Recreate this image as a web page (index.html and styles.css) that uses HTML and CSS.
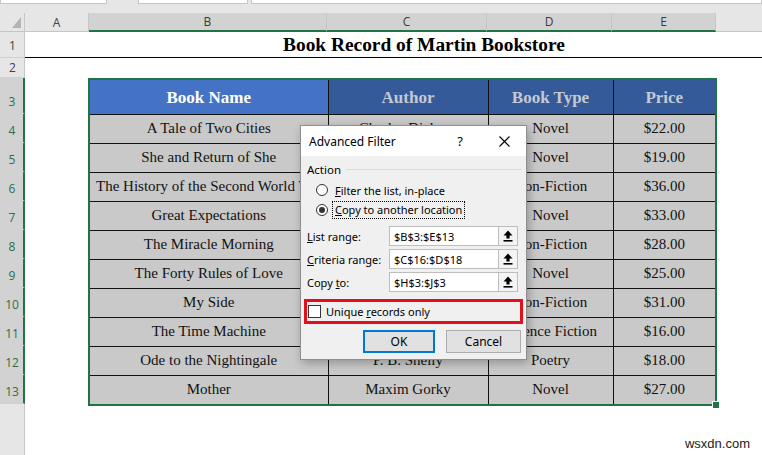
FILE: index.html
```html
<!DOCTYPE html>
<html lang="en">
<head>
    <meta charset="UTF-8">
    <title>Book Record of Martin Bookstore</title>
    <link rel="stylesheet" href="styles.css">
</head>
<body>
    <div class="topbar">
        <div class="namebox"></div>
        <div class="fxbox"></div>
        <div class="formula"></div>
    </div>

    <div class="colheads">
        <div class="corner"><span class="tri"></span></div>
        <div class="colhead col-a">A</div>
        <div class="colhead col-b sel">B</div>
        <div class="colhead col-c sel">C</div>
        <div class="colhead col-d sel">D</div>
        <div class="colhead col-e sel">E</div>
        <div class="colhead col-rest"></div>
    </div>

    <div class="sheet">
        <div class="rowheads">
            <div class="rowhead r1">1</div>
            <div class="rowhead r2">2</div>
            <div class="rowhead r3 sel">3</div>
            <div class="rowhead sel">4</div>
            <div class="rowhead sel">5</div>
            <div class="rowhead sel">6</div>
            <div class="rowhead sel">7</div>
            <div class="rowhead sel">8</div>
            <div class="rowhead sel">9</div>
            <div class="rowhead sel">10</div>
            <div class="rowhead sel">11</div>
            <div class="rowhead sel">12</div>
            <div class="rowhead sel">13</div>
            <div class="rowhead fill"></div>
        </div>

        <div class="cells">
            <div class="title-row"><span>Book Record of Martin Bookstore</span></div>
            <div class="blank-row"></div>
            <div class="records-wrap">
                <table class="records">
                    <colgroup>
                        <col class="w-b"><col class="w-c"><col class="w-d"><col class="w-e">
                    </colgroup>
                    <tr class="head">
                        <th class="active">Book Name</th>
                        <th>Author</th>
                        <th>Book Type</th>
                        <th>Price</th>
                    </tr>
                    <tr><td>A Tale of Two Cities</td><td>Charles Dickens</td><td>Novel</td><td>$22.00</td></tr>
                    <tr><td>She and Return of She</td><td>H. Rider Haggard</td><td>Novel</td><td>$19.00</td></tr>
                    <tr><td class="clip">The History of the Second World War</td><td>Winston Churchill</td><td>Non-Fiction</td><td>$36.00</td></tr>
                    <tr><td>Great Expectations</td><td>Charles Dickens</td><td>Novel</td><td>$33.00</td></tr>
                    <tr><td>The Miracle Morning</td><td>Hal Elrod</td><td>Non-Fiction</td><td>$28.00</td></tr>
                    <tr><td>The Forty Rules of Love</td><td>Elif Shafak</td><td>Novel</td><td>$25.00</td></tr>
                    <tr><td>My Side</td><td>David Beckham</td><td>Non-Fiction</td><td>$31.00</td></tr>
                    <tr><td>The Time Machine</td><td>H. G. Wells</td><td>Science Fiction</td><td>$16.00</td></tr>
                    <tr><td>Ode to the Nightingale</td><td>P. B. Shelly</td><td>Poetry</td><td>$18.00</td></tr>
                    <tr class="last"><td>Mother</td><td>Maxim Gorky</td><td>Novel</td><td>$27.00</td></tr>
                </table>
                <span class="handle"></span>
            </div>
        </div>
    </div>

    <!-- Advanced Filter dialog, floating over the sheet -->
    <div class="dialog">
        <div class="dlg-title">
            <span class="dlg-name">Advanced Filter</span>
            <span class="dlg-help">?</span>
            <span class="dlg-close">
                <svg width="11" height="11" viewBox="0 0 11 11"><path d="M0.5 0.5 L10.5 10.5 M10.5 0.5 L0.5 10.5" stroke="#000" stroke-width="1.1" fill="none"/></svg>
            </span>
        </div>
        <div class="dlg-body">
            <div class="legend"><span>Action</span><span class="legend-line"></span></div>
            <div class="radio-row first">
                <span class="radio"></span>
                <span class="radio-text"><u>F</u>ilter the list, in-place</span>
            </div>
            <div class="radio-row">
                <span class="radio checked"></span>
                <span class="radio-text focus"><u>C</u>opy to another location</span>
            </div>

            <div class="range-row first">
                <span class="range-label"><u>L</u>ist range:</span>
                <div class="range-field"><span class="range-value">$B$3:$E$13</span><span class="range-btn"><svg width="10" height="12" viewBox="0 0 10 12"><path d="M5 0.5 L9.5 5.5 H6.6 V8.5 H3.4 V5.5 H0.5 Z" fill="#000"/><rect x="0.5" y="10" width="9" height="1.6" fill="#000"/></svg></span></div>
            </div>
            <div class="range-row">
                <span class="range-label"><u>C</u>riteria range:</span>
                <div class="range-field"><span class="range-value">$C$16:$D$18</span><span class="range-btn"><svg width="10" height="12" viewBox="0 0 10 12"><path d="M5 0.5 L9.5 5.5 H6.6 V8.5 H3.4 V5.5 H0.5 Z" fill="#000"/><rect x="0.5" y="10" width="9" height="1.6" fill="#000"/></svg></span></div>
            </div>
            <div class="range-row">
                <span class="range-label">Copy <u>t</u>o:</span>
                <div class="range-field"><span class="range-value">$H$3:$J$3</span><span class="range-btn"><svg width="10" height="12" viewBox="0 0 10 12"><path d="M5 0.5 L9.5 5.5 H6.6 V8.5 H3.4 V5.5 H0.5 Z" fill="#000"/><rect x="0.5" y="10" width="9" height="1.6" fill="#000"/></svg></span></div>
            </div>

            <div class="unique-box">
                <span class="checkbox"></span>
                <span>Unique <u>r</u>ecords only</span>
            </div>

            <div class="dlg-buttons">
                <button class="btn default">OK</button>
                <button class="btn">Cancel</button>
            </div>
        </div>
    </div>

    <div class="watermark">wsxdn.com</div>
</body>
</html>
```

FILE: styles.css
```css
body {
    margin: 0;
    width: 762px;
    height: 455px;
    overflow: hidden;
    background: #fff;
    position: relative;
}

/* barra superior (cuadro de nombre y fórmulas) */
.topbar {
    height: 13px;
    background: #e6e6e6;
    display: flex;
    align-items: flex-start;
}

.topbar div {
    height: 3px;
    background: #fff;
    border: 1px solid #c6c6c6;
    border-top: none;
}

.namebox { width: 105px; }
.fxbox { width: 108px; margin-left: 31px; }
.formula { flex: 1; margin-left: 3px; }

/* encabezados de columna */
.colheads {
    display: flex;
    height: 19px;
    background: #e6e6e6;
    font-family: "Open Sans", "Noto Sans", sans-serif;
    font-size: 12px;
    color: #444;
}

.corner {
    width: 25px;
    box-sizing: border-box;
    border-right: 1px solid #c6c6c6;
    border-bottom: 1px solid #c6c6c6;
    position: relative;
}

.tri {
    position: absolute;
    right: 3px;
    bottom: 3px;
    width: 0;
    height: 0;
    border-left: 9px solid transparent;
    border-bottom: 11px solid #b4b4b4;
}

.colhead {
    box-sizing: border-box;
    border-right: 1px solid #c6c6c6;
    border-bottom: 1px solid #c6c6c6;
    display: flex;
    align-items: center;
    justify-content: center;
}

.colhead.sel {
    background: #d2d2d2;
    border-bottom: 2px solid #217346;
    color: #3a3a3a;
}

.col-a { width: 64px; }
.col-b { width: 238px; }
.col-c { width: 160px; }
.col-d { width: 125px; }
.col-e { width: 104px; }
.col-rest { flex: 1; border-right: none; }

/* hoja */
.sheet {
    display: flex;
    height: 423px;
}

.rowheads {
    width: 25px;
    display: flex;
    flex-direction: column;
    background: #e6e6e6;
    font-family: "Open Sans", "Noto Sans", sans-serif;
    font-size: 12px;
    color: #444;
}

.rowhead {
    box-sizing: border-box;
    height: 29px;
    border-bottom: 1px solid #d0d0d0;
    border-right: 1px solid #c6c6c6;
    display: flex;
    align-items: flex-end;
    justify-content: center;
    padding-bottom: 3px;
    padding-left: 1px;
}

.rowhead.r1 { height: 26px; }
.rowhead.r2 { height: 20px; padding-bottom: 1px; }
.rowhead.r3 { height: 36px; }

.rowhead.sel {
    background: #d2d2d2;
    border-right: 2px solid #217346;
    color: #2c6e49;
}

.rowhead.fill {
    flex: 1;
    border-bottom: none;
}

.cells {
    flex: 1;
    font-family: "Liberation Serif", "Times New Roman", serif;
}

.title-row {
    height: 26px;
    box-sizing: border-box;
    border-bottom: 1px solid #000;
    padding-left: 258px;
    font-weight: bold;
    font-size: 19.4px;
    line-height: 26px;
}

.blank-row { height: 20px; }

.records-wrap {
    margin-left: 63px;
    width: 629px;
    box-sizing: border-box;
    border: 2px solid #217346;
    position: relative;
}

.records {
    border-collapse: collapse;
    table-layout: fixed;
    width: 625px;
}

.w-b { width: 238px; }
.w-c { width: 160px; }
.w-d { width: 125px; }
.w-e { width: 102px; }

.records th,
.records td {
    padding: 0;
    text-align: center;
    white-space: nowrap;
    overflow: hidden;
    border-right: 1px solid #111;
    border-bottom: 1px solid #111;
}

.records th:last-child,
.records td:last-child {
    border-right: none;
}

.records tr.last td {
    border-bottom: none;
}

.records th {
    height: 33px;
    background: #345a9a;
    color: #c5c9d2;
    font-size: 17px;
    font-weight: bold;
    padding-top: 1px;
}

.records th.active {
    background: #4472c4;
    color: #fff;
}

.records td {
    height: 29px;
    background: #c9c9c9;
    font-size: 15px;
    color: #111;
    padding-bottom: 1px;
    box-sizing: border-box;
}

.records tr.last td { height: 28px; }

.records td.clip {
    text-align: left;
    padding-left: 6px;
    overflow: visible;
}

.handle {
    position: absolute;
    right: -5px;
    bottom: -5px;
    width: 6px;
    height: 6px;
    background: #217346;
    border: 1px solid #fff;
}

/* diálogo de filtro avanzado */
.dialog {
    position: absolute;
    left: 300px;
    top: 125px;
    width: 227px;
    height: 235px;
    box-sizing: border-box;
    border: 1px solid #8e8e8e;
    background: #f0f0f0;
    box-shadow: 2px 3px 9px rgba(0, 0, 0, 0.28);
    font-family: "Noto Sans", "Open Sans", sans-serif;
    font-size: 11px;
    color: #000;
}

.dlg-title {
    height: 30px;
    background: #fff;
    display: flex;
    align-items: center;
    padding-left: 8px;
    font-size: 12px;
}

.dlg-name { flex: 1; }

.dlg-help {
    width: 20px;
    text-align: center;
    font-size: 13px;
}

.dlg-close {
    width: 30px;
    margin-left: 19px;
    margin-right: 7px;
    display: flex;
    justify-content: center;
}

.dlg-body {
    padding: 0 5px 0 6px;
}

.legend {
    display: flex;
    align-items: center;
    height: 14px;
    margin-top: 6px;
    font-size: 11.5px;
}

.legend-line {
    flex: 1;
    border-top: 1px solid #dadada;
    margin-left: 5px;
}

.radio-row {
    display: flex;
    align-items: center;
    height: 20px;
    padding-left: 9px;
}

.radio-row.first { margin-top: 4px; }

.radio {
    width: 12px;
    height: 12px;
    box-sizing: border-box;
    border: 1px solid #333;
    border-radius: 50%;
    background: #fff;
    position: relative;
}

.radio.checked::after {
    content: "";
    position: absolute;
    left: 2px;
    top: 2px;
    width: 6px;
    height: 6px;
    border-radius: 50%;
    background: #333;
}

.radio-text { margin-left: 7px; }

.radio-text.focus {
    margin-left: 5px;
    padding: 0 2px;
    outline: 1px dotted #000;
    line-height: 16px;
}

.range-row {
    display: flex;
    align-items: center;
    height: 20px;
    margin-top: 3px;
}

.range-row.first { margin-top: 6px; }

.range-label { width: 82px; }

.range-field {
    width: 129px;
    height: 20px;
    box-sizing: border-box;
    border: 1px solid #bdbdbd;
    background: #fff;
    display: flex;
    align-items: center;
}

.range-value {
    flex: 1;
    padding-left: 4px;
}

.range-btn {
    width: 18px;
    height: 18px;
    border-left: 1px solid #bdbdbd;
    background: #f4f4f4;
    display: flex;
    align-items: center;
    justify-content: center;
}

.unique-box {
    margin-top: 7px;
    margin-left: -3px;
    width: 219px;
    height: 25px;
    box-sizing: border-box;
    border: 3px solid #e3101b;
    display: flex;
    align-items: center;
    padding-left: 1px;
}

.checkbox {
    width: 13px;
    height: 13px;
    box-sizing: border-box;
    border: 1px solid #333;
    background: #fff;
    margin-right: 5px;
}

.dlg-buttons {
    display: flex;
    justify-content: flex-end;
    gap: 11px;
    margin-top: 6px;
}

.btn {
    height: 23px;
    width: 75px;
    box-sizing: border-box;
    border: 1px solid #adadad;
    background: #e1e1e1;
    font-family: inherit;
    font-size: 12px;
    padding: 0;
}

.btn.default {
    width: 72px;
    border: 2px solid #0078d7;
}

.watermark {
    position: absolute;
    right: 12px;
    bottom: 4px;
    font-family: "Liberation Sans", Arial, sans-serif;
    font-size: 13px;
    color: #222;
}
```
